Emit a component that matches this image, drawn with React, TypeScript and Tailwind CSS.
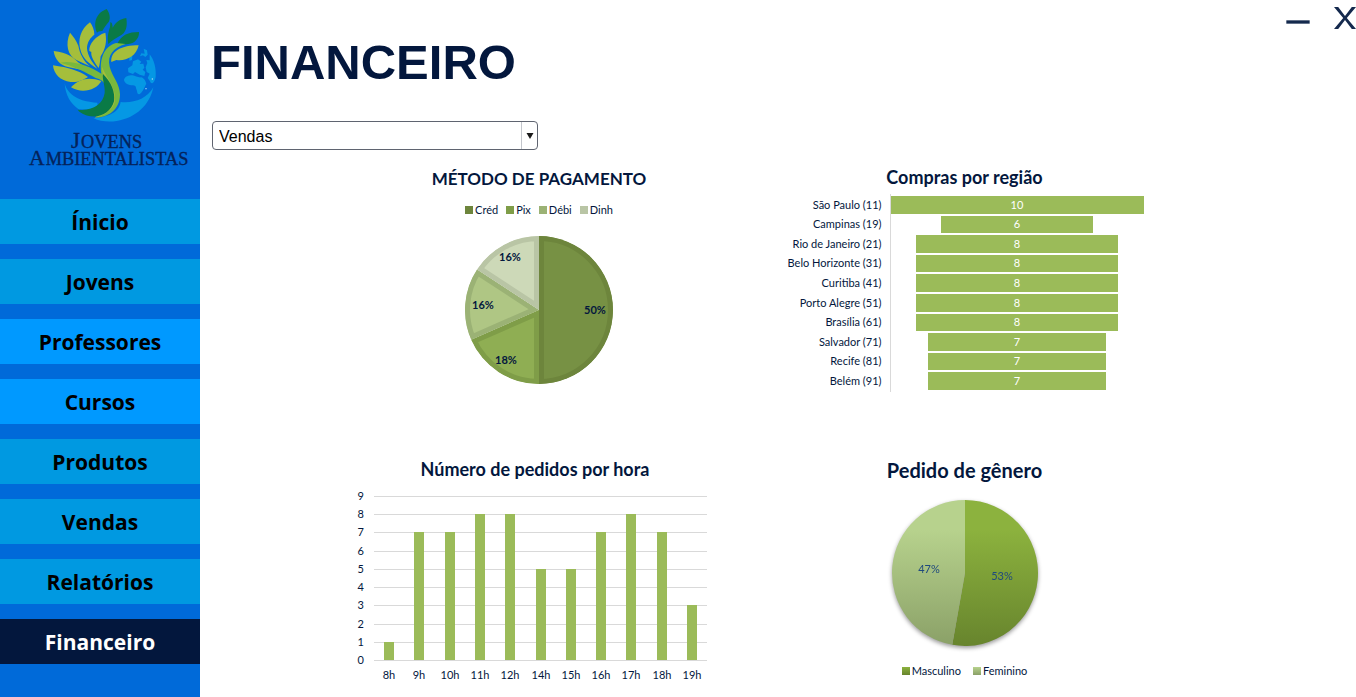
import { Minus } from "lucide-react";

const NAV = [
  { label: "Ínicio", tone: "bg-[#0099e1] text-black" },
  { label: "Jovens", tone: "bg-[#0099e1] text-black" },
  { label: "Professores", tone: "bg-[#0099ff] text-black" },
  { label: "Cursos", tone: "bg-[#0099ff] text-black" },
  { label: "Produtos", tone: "bg-[#0099e1] text-black" },
  { label: "Vendas", tone: "bg-[#0099e1] text-black" },
  { label: "Relatórios", tone: "bg-[#0099e1] text-black" },
  { label: "Financeiro", tone: "bg-[#03173d] text-white" },
];

const REGIONS = [
  { name: "São Paulo (11)", value: 10 },
  { name: "Campinas (19)", value: 6 },
  { name: "Rio de Janeiro (21)", value: 8 },
  { name: "Belo Horizonte (31)", value: 8 },
  { name: "Curitiba (41)", value: 8 },
  { name: "Porto Alegre (51)", value: 8 },
  { name: "Brasília (61)", value: 8 },
  { name: "Salvador (71)", value: 7 },
  { name: "Recife (81)", value: 7 },
  { name: "Belém (91)", value: 7 },
];

const HOURS = [
  { hour: "8h", orders: 1 },
  { hour: "9h", orders: 7 },
  { hour: "10h", orders: 7 },
  { hour: "11h", orders: 8 },
  { hour: "12h", orders: 8 },
  { hour: "14h", orders: 5 },
  { hour: "15h", orders: 5 },
  { hour: "16h", orders: 7 },
  { hour: "17h", orders: 8 },
  { hour: "18h", orders: 7 },
  { hour: "19h", orders: 3 },
];

const PAYMENTS = [
  { id: "cred", label: "Créd", count: 19, share: "50%", fill: "#779144", edge: "#6d853c", swatch: "bg-[#6d853c]", x: 131, y: 79 },
  { id: "pix", label: "Pix", count: 7, share: "18%", fill: "#8fae53", edge: "#7f9d48", swatch: "bg-[#7f9d48]", x: 42, y: 129 },
  { id: "debi", label: "Débi", count: 6, share: "16%", fill: "#afc684", edge: "#9bb275", swatch: "bg-[#9bb275]", x: 19, y: 74 },
  { id: "dinh", label: "Dinh", count: 6, share: "16%", fill: "#cdd9b8", edge: "#b9c5a5", swatch: "bg-[#b9c5a5]", x: 46, y: 26 },
];

function slicePath(cx: number, cy: number, r: number, from: number, to: number) {
  const point = (turn: number) => {
    const a = turn * 2 * Math.PI - Math.PI / 2;
    return `${cx + r * Math.cos(a)} ${cy + r * Math.sin(a)}`;
  };
  const large = to - from > 0.5 ? 1 : 0;
  return `M${cx} ${cy}L${point(from)}A${r} ${r} 0 ${large} 1 ${point(to)}Z`;
}

function Logo() {
  return (
    <svg viewBox="0 0 600 570" className="h-[190px] w-[200px]" role="img" aria-label="Jovens Ambientalistas">
      <path fill="#0598e4" d="M194 250C202 285 240 306 292 308C296 322 280 330 236 328C212 312 196 285 194 250Z" />
      <path fill="#0598e4" d="M460 262C440 298 400 310 362 306C358 332 335 350 280 355C300 364 325 367 350 363C408 354 449 315 460 262Z" />
      <path
        fill="#0598e4"
        d="M372 240C374 229 386 226 397 226C407 228 412 233 424 232C434 235 437 245 439 252C434 258 431 272 422 280C417 286 411 282 411 273C406 261 410 258 399 256C385 256 374 250 372 240Z M385 217L384 205L397 196L399 184L414 178L424 185L419 192L430 191L433 203L428 209L436 216L433 228L419 224L405 216L399 222Z M431 146L441 151L443 164L436 171L429 166L420 169L424 160L434 161Z M388 167L397 169L396 180L388 182Z M449 163C462 180 469 203 467 231C464 247 455 257 450 244L443 234L449 221L440 216L437 202L442 189L439 180L449 181Z"
      />
      <circle cx="457" cy="237" r="2" fill="#bfe4f8" />
      <circle cx="438" cy="266" r="2" fill="#bfe4f8" />
      <g fill="#0a7a46">
        <path d="M291 98C280 73 285 40 320 27C330 40 332 57 326 66C318 75 312 84 307 93C300 92 294 95 291 98Z" />
        <path d="M325 132C321 107 326 96 330 81L331 67C335 65 338 75 338 83C347 67 359 57 379 54C383 81 378 99 359 108C345 116 335 122 325 132Z" />
        <path d="M352 131C364 105 385 96 417 96C418 113 406 130 385 132C374 134 363 132 352 131Z" />
      </g>
      <g fill="#a5be3b">
        <path d="M270 67C242 87 231 121 243 155C250 176 266 190 292 206C275 184 264 169 261 146C261 126 272 112 283 104C283 91 278 78 270 67Z" />
        <path d="M316 98C287 107 266 132 268 153L274 156C272 169 282 185 296 204C300 193 300 181 302 169C317 146 321 124 316 98Z" />
        <path d="M210 98C195 133 203 166 229 180L270 199C250 182 239 160 235 137C229 121 219 108 210 98Z" />
        <path d="M161 153C164 178 181 197 204 201L276 216C259 203 248 196 234 187C221 172 203 158 161 153Z" />
        <path d="M159 196C161 222 181 243 212 246C235 248 250 239 264 231C235 211 206 203 159 196Z" />
        <path d="M213 262C239 234 269 230 304 243C290 270 246 282 213 262Z" />
        <path d="M334 186C331 154 364 136 416 136C409 170 377 184 349 180Z" />
      </g>
      <path fill="#79b83d" d="M181 188C218 180 272 200 304 221C298 178 311 140 348 129L377 132C340 143 321 166 329 200C337 231 360 252 360 283C360 331 322 354 284 353C320 335 333 309 325 277C317 250 309 239 287 234C257 216 222 199 181 188Z" />
      <path fill="#a5be3b" d="M306 200C322 238 352 269 344 307C337 331 313 347 286 352C319 332 330 303 326 274C321 249 306 230 306 200Z" />
      <path fill="#0a7a46" d="M309 222C334 247 346 276 342 304C331 344 283 366 238 335L233 329C281 334 309 311 314 279C316 257 306 239 309 222Z" />
      <text fill="#04225a" stroke="#04225a" strokeWidth="1" fontSize="55" className="font-['Liberation_Serif',serif]">
        <tspan x="213" y="443" fontSize="70">J</tspan>
        <tspan x="243">OVENS</tspan>
        <tspan x="87" y="495" fontSize="65">A</tspan>
        <tspan x="137">MBIENTALISTAS</tspan>
      </text>
    </svg>
  );
}

const TITLE_SIZES = { sm: "text-[17px]", md: "text-[18px]", lg: "text-[20px]" };

function ChartTitle({ size = "md", children }: { size?: keyof typeof TITLE_SIZES; children: string }) {
  return (
    <figcaption className={`pb-0.5 text-center leading-[22px] font-bold text-[#03173d] ${TITLE_SIZES[size]}`}>
      {children}
    </figcaption>
  );
}

function PaymentChart() {
  const total = PAYMENTS.reduce((sum, p) => sum + p.count, 0);
  let turn = 0;
  const slices = PAYMENTS.map((p) => {
    const from = turn;
    turn += p.count / total;
    return { ...p, d: slicePath(75, 75, 74, from, turn) };
  });
  return (
    <figure className="flex flex-col items-center pt-0.5">
      <ChartTitle size="sm">MÉTODO DE PAGAMENTO</ChartTitle>
      <ul className="mt-2.5 flex gap-2 text-[11px] leading-4">
        {PAYMENTS.map((p) => (
          <li key={p.id} className="flex items-center gap-0.5">
            <span className={`size-2 ${p.swatch}`} />
            {p.label}
          </li>
        ))}
      </ul>
      <svg viewBox="0 0 150 150" className="mt-[17px] size-[150px]">
        {slices.map((s) => (
          <g key={s.id}>
            <clipPath id={s.id}>
              <path d={s.d} />
            </clipPath>
            <path d={s.d} fill={s.fill} stroke={s.edge} strokeWidth="10" clipPath={`url(#${s.id})`} />
          </g>
        ))}
        <g fill="#03173d" fontSize="11" fontWeight="700" textAnchor="middle">
          {slices.map((s) => (
            <text key={s.id} x={s.x} y={s.y}>
              {s.share}
            </text>
          ))}
        </g>
      </svg>
    </figure>
  );
}

function RegionChart() {
  return (
    <figure>
      <ChartTitle>Compras por região</ChartTitle>
      <div className="mt-1 grid h-[198px] grid-cols-[96px_1fr] gap-x-2 text-[11px]">
        <ul className="flex flex-col py-px text-right">
          {REGIONS.map((r) => (
            <li key={r.name} className="flex flex-1 items-center justify-end whitespace-nowrap">
              {r.name}
            </li>
          ))}
        </ul>
        <ul className="flex flex-col border-l border-[#d9d9d9] py-px text-white">
          {REGIONS.map((r) => (
            <li key={r.name} className="flex flex-1 justify-center py-px">
              <span className="flex items-center justify-center bg-[#9bbb59]" style={{ width: `${r.value * 10}%` }}>
                {r.value}
              </span>
            </li>
          ))}
        </ul>
      </div>
    </figure>
  );
}

function HourChart() {
  const left = 17;
  const width = 333;
  const base = 174;
  const yOf = (v: number) => base - Math.round((v * 164) / 9);
  const xOf = (i: number) => left + Math.round(((i + 0.5) * width) / HOURS.length);
  return (
    <figure className="w-[357px]">
      <ChartTitle>Número de pedidos por hora</ChartTitle>
      <svg viewBox="0 0 357 200" className="mt-1 h-[200px] w-full" fontSize="11" fill="#03173d">
        {Array.from({ length: 10 }, (_, v) => (
          <g key={v}>
            <rect x={left} y={yOf(v)} width={width} height="1" fill="#d9d9d9" />
            <text x="7" y={yOf(v) + 4} textAnchor="end">
              {v}
            </text>
          </g>
        ))}
        {HOURS.map((h, i) => (
          <g key={h.hour}>
            <rect x={xOf(i) - 5} y={yOf(h.orders)} width="10" height={base - yOf(h.orders)} fill="#9bbb59" />
            <text x={xOf(i)} y="193" textAnchor="middle">
              {h.hour}
            </text>
          </g>
        ))}
      </svg>
    </figure>
  );
}

function GenderChart() {
  return (
    <figure className="flex flex-col items-center pt-px">
      <ChartTitle size="lg">Pedido de gênero</ChartTitle>
      <svg viewBox="0 0 160 160" className="mt-[11px] size-40 drop-shadow-[0_2px_2px_rgba(0,0,0,0.4)]">
        <defs>
          <linearGradient id="masculino" gradientUnits="userSpaceOnUse" x1="0" y1="6" x2="0" y2="153">
            <stop offset="0.2" stopColor="#8cb23e" />
            <stop offset="1" stopColor="#67842d" />
          </linearGradient>
          <linearGradient id="feminino" gradientUnits="userSpaceOnUse" x1="0" y1="6" x2="0" y2="153">
            <stop offset="0.2" stopColor="#b7d28d" />
            <stop offset="1" stopColor="#8aa067" />
          </linearGradient>
        </defs>
        <path d={slicePath(80, 79, 73, 0, 0.528)} fill="url(#masculino)" />
        <path d={slicePath(80, 79, 73, 0.528, 1)} fill="url(#feminino)" />
        <g fill="#1f497d" fontSize="11" textAnchor="middle">
          <text x="117" y="86">53%</text>
          <text x="44" y="79">47%</text>
        </g>
      </svg>
      <ul className="mt-[9px] flex gap-3 text-[11px] leading-4">
        <li className="flex items-center gap-0.5">
          <span className="size-2 bg-linear-to-b from-[#8cb23e] to-[#67842d]" />
          Masculino
        </li>
        <li className="flex items-center gap-0.5">
          <span className="size-2 bg-linear-to-b from-[#b7d28d] to-[#8aa067]" />
          Feminino
        </li>
      </ul>
    </figure>
  );
}

export default function App() {
  return (
    <div className="flex min-h-screen bg-white">
      <aside className="flex w-[200px] shrink-0 flex-col bg-[#006ad9]">
        <Logo />
        <nav className="mt-[9px] flex flex-col gap-[15px] font-['Open_Sans',sans-serif] text-[21px] font-bold">
          {NAV.map((item) => (
            <a key={item.label} href="#" className={`flex h-[45px] items-center justify-center pt-0.5 ${item.tone}`}>
              {item.label}
            </a>
          ))}
        </nav>
      </aside>

      <main className="min-w-0 flex-1">
        <header className="flex items-start justify-between pl-[11px]">
          <h1 className="pt-8 font-['Liberation_Sans',sans-serif] text-[49px] leading-[60px] font-bold text-[#03173d]">
            FINANCEIRO
          </h1>
          <div className="flex items-center gap-5 pt-1.5 text-[#14294d]">
            <button type="button" aria-label="Minimizar" className="flex h-8 w-8 items-center justify-center">
              <Minus size={40} strokeWidth={2} strokeLinecap="butt" className="shrink-0" />
            </button>
            <button type="button" aria-label="Fechar" className="-mt-2 flex h-6">
              <svg viewBox="0 0 22 24" className="h-6 w-[22px]" fill="currentColor">
                <path d="M0 1H4.200L11 10L17.800 1H22L12.800 12L22 23H17.800L11 14L4.200 23H0L9.200 12Z" />
              </svg>
            </button>
          </div>
        </header>

        <div className="relative mt-[29px] ml-3 w-[326px] font-['Liberation_Sans',sans-serif]">
          <select
            aria-label="Relatório"
            className="h-[29px] w-full appearance-none rounded border border-[#5f6470] bg-white pt-0.5 pl-1.5 text-base text-black"
          >
            <option>Vendas</option>
          </select>
          <span className="pointer-events-none absolute inset-y-px right-px flex w-4 items-center justify-center border-l border-[#c3c6cc]">
            <svg viewBox="0 0 8 6" className="h-1.5 w-2">
              <path d="M0.500 0H7.500L4 6Z" fill="#1a1a1a" />
            </svg>
          </span>
        </div>

        <div className="mt-4 grid grid-cols-[365px_358px] justify-center gap-x-16 pr-17 pl-3 font-['Lato',sans-serif] text-[#03173d]">
          <div className="h-[292px]">
            <PaymentChart />
          </div>
          <RegionChart />
          <HourChart />
          <GenderChart />
        </div>
      </main>
    </div>
  );
}
